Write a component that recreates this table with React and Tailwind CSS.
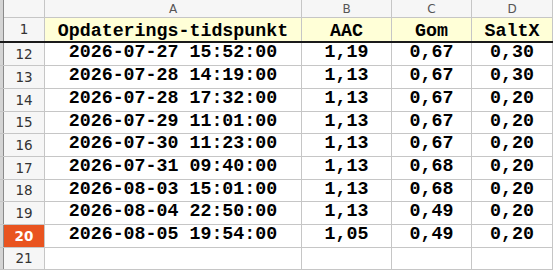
import React from "react";

const rows = [
  { n: 12, t: "2026-07-27 15:52:00", b: "1,19", c: "0,67", d: "0,30", h: "h-[23px]" },
  { n: 13, t: "2026-07-28 14:19:00", b: "1,13", c: "0,67", d: "0,30", h: "h-[23px]" },
  { n: 14, t: "2026-07-28 17:32:00", b: "1,13", c: "0,67", d: "0,20", h: "h-[23px]" },
  { n: 15, t: "2026-07-29 11:01:00", b: "1,13", c: "0,67", d: "0,20", h: "h-[22px]" },
  { n: 16, t: "2026-07-30 11:23:00", b: "1,13", c: "0,67", d: "0,20", h: "h-[23px]" },
  { n: 17, t: "2026-07-31 09:40:00", b: "1,13", c: "0,68", d: "0,20", h: "h-[23px]" },
  { n: 18, t: "2026-08-03 15:01:00", b: "1,13", c: "0,68", d: "0,20", h: "h-[22px]" },
  { n: 19, t: "2026-08-04 22:50:00", b: "1,13", c: "0,49", d: "0,20", h: "h-[23px]" },
  { n: 20, t: "2026-08-05 19:54:00", b: "1,05", c: "0,49", d: "0,20", h: "h-[23px]", active: true },
  { n: 21, t: "", b: "", c: "", d: "", h: "h-[22px]" },
];

const cols = "grid grid-cols-[4px_41px_257px_90px_80px_81px_1fr]";
const mono = "font-['Liberation_Mono',monospace] font-bold text-[18.3px] leading-[18px] text-black";
const sans = "font-['DejaVu_Sans','Liberation_Sans',sans-serif]";

function Strip() {
  return <div className="bg-[#d4d4d4] border-r border-[#8a8a8a]" />;
}

export default function App() {
  return (
    <div className="w-[553px] h-[275px] overflow-hidden bg-white">
      {/* column letters */}
      <div className={`${cols} h-[18px] bg-[#f6f6f6] border-b border-[#c6c6c6] ${sans} text-[12px] text-[#555]`}>
        <Strip />
        <div className="border-r border-[#c6c6c6]" />
        <div className="border-r border-[#c6c6c6] flex items-center justify-center">A</div>
        <div className="border-r border-[#c6c6c6] flex items-center justify-center">B</div>
        <div className="border-r border-[#c6c6c6] flex items-center justify-center">C</div>
        <div className="border-r border-[#c6c6c6] flex items-center justify-center">D</div>
        <div />
      </div>

      {/* frozen header row */}
      <div className={`${cols} h-[25px] border-b-2 border-[#1a1a1a]`}>
        <Strip />
        <div className={`bg-[#f6f6f6] border-r border-[#c6c6c6] flex items-center justify-center ${sans} text-[13.5px] text-[#333]`}>1</div>
        <div className={`bg-[#ffffd7] border-r border-[#c6c6c6] flex items-start justify-center pt-[4px] ${mono}`}>Opdaterings-tidspunkt</div>
        <div className={`bg-[#ffffd7] border-r border-[#c6c6c6] flex items-start justify-center pt-[4px] ${mono}`}>AAC</div>
        <div className={`bg-[#ffffd7] border-r border-[#c6c6c6] flex items-start justify-center pt-[4px] ${mono}`}>Gom</div>
        <div className={`bg-[#ffffd7] border-r border-[#c6c6c6] flex items-start justify-center pt-[4px] ${mono}`}>SaltX</div>
        <div className="bg-[#ffffd7]" />
      </div>

      {rows.map((r) => (
        <div key={r.n} className={`${cols} ${r.h} border-b border-[#c6c6c6]`}>
          <Strip />
          <div
            className={
              r.active
                ? `bg-[#e95420] border-r border-[#c6c6c6] flex items-center justify-center ${sans} text-[13.5px] font-bold text-white`
                : `bg-[#f6f6f6] border-r border-[#c6c6c6] flex items-center justify-center ${sans} text-[13.5px] text-[#333]`
            }
          >
            {r.n}
          </div>
          <div className={`border-r border-[#c6c6c6] flex items-start justify-center ${mono}`}>{r.t}</div>
          <div className={`border-r border-[#c6c6c6] flex items-start justify-center ${mono}`}>{r.b}</div>
          <div className={`border-r border-[#c6c6c6] flex items-start justify-center ${mono}`}>{r.c}</div>
          <div className={`border-r border-[#c6c6c6] flex items-start justify-center ${mono}`}>{r.d}</div>
          <div className={r.active ? "border-l border-[#e95420]" : ""} />
        </div>
      ))}
    </div>
  );
}
